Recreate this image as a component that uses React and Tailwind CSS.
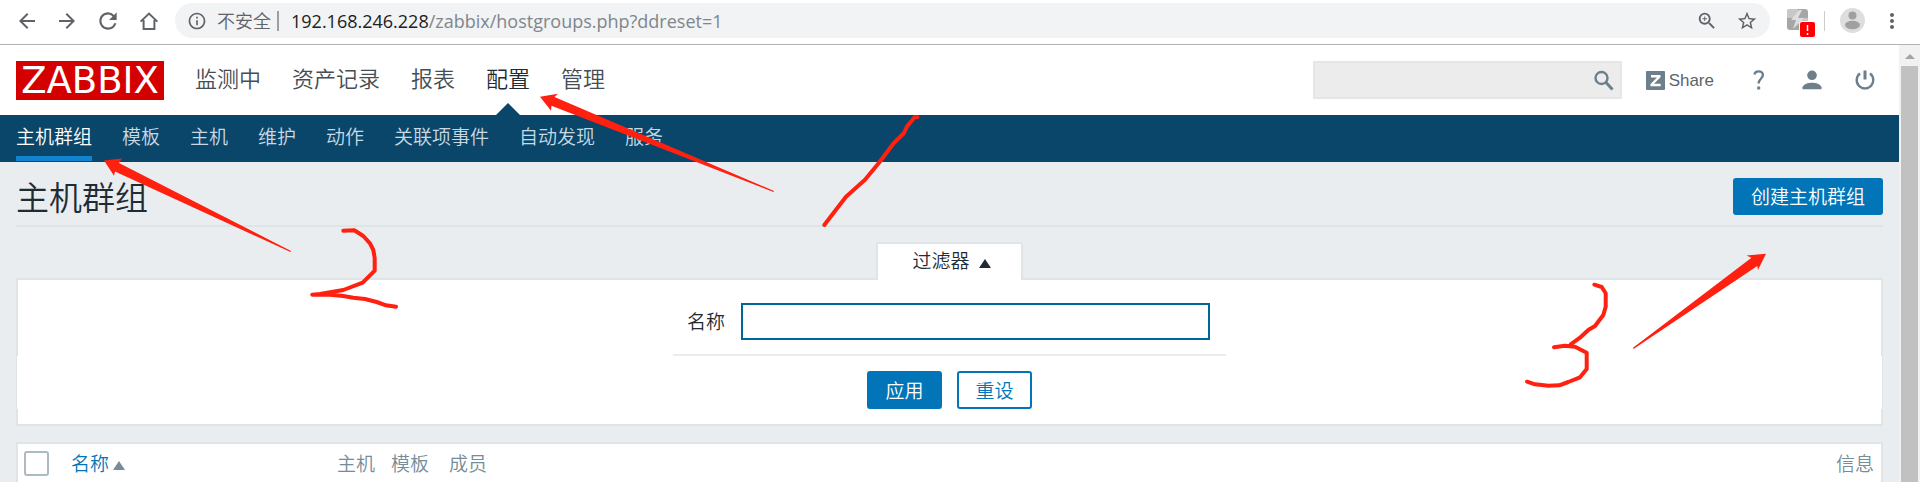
import React from "react";
import {
  MdArrowBack,
  MdArrowForward,
  MdRefresh,
  MdInfoOutline,
  MdZoomIn,
  MdStarBorder,
  MdMoreVert,
} from "react-icons/md";

const mainMenu = ["监测中", "资产记录", "报表", "配置", "管理"];
const subMenu = ["主机群组", "模板", "主机", "维护", "动作", "关联项事件", "自动发现", "服务"];

function Toolbar() {
  return (
    <div className="flex h-[45px] items-center border-b border-[#b3b3b3] bg-white pb-[3px] pl-[15px] pr-4 text-[#5f6368]">
      <div className="flex items-center gap-4">
        <button aria-label="后退"><MdArrowBack className="size-6" /></button>
        <button aria-label="前进"><MdArrowForward className="size-6" /></button>
        <button aria-label="重新加载"><MdRefresh className="size-[26px]" /></button>
        <button aria-label="主页">
          <svg viewBox="0 0 24 24" className="size-6" fill="none" stroke="currentColor" strokeWidth="2">
            <path d="M3.600 12.600 12 4.600l8.400 8M6.600 11v8.900h10.800V11" />
          </svg>
        </button>
      </div>
      <div className="ml-[14px] flex h-[35px] grow items-center rounded-full bg-[#f1f3f4] pl-3 pr-3">
        <MdInfoOutline className="size-5" />
        <span className="ml-[10px] text-[18px] font-[350]">不安全</span>
        <span className="ml-[6px] h-5 w-[2px] bg-[#9aa0a6]" />
        <div className="ml-3 whitespace-nowrap font-['Open_Sans','Noto_Sans',sans-serif] text-[18px] leading-6 text-[#80868b]">
          <span className="text-[#202124]">192.168.246.228</span>/zabbix/hostgroups.php?ddreset=1
        </div>
        <div className="ml-auto flex items-center gap-[18px]">
          <button aria-label="缩放"><MdZoomIn className="size-[22px]" /></button>
          <button aria-label="添加书签"><MdStarBorder className="size-[22px]" /></button>
        </div>
      </div>
      <button aria-label="扩展程序" className="ml-4">
        <svg width="30" height="30" viewBox="0 0 30 30" className="mt-1">
          <rect x="1" y="1" width="21" height="21" rx="3" fill="#a6a6a6" />
          <path d="M4 1h8v9H1V4a3 3 0 0 1 3-3M12 10h10v3H12z" fill="#c8c8c8" />
          <path d="M13 2 5 12h5l-3 9 11-11h-6l4-8z" fill="#dedede" />
          <rect x="13" y="13" width="17" height="17" rx="3" fill="#fff" />
          <rect x="14" y="14" width="15" height="15" rx="2" fill="#f00" />
          <path d="M21.500 17v6M21.500 25v2" stroke="#fff" strokeWidth="1.500" />
        </svg>
      </button>
      <span className="ml-[8px] h-5 w-px bg-[#ccc]" />
      <button aria-label="用户" className="ml-[15px]">
        <svg width="25" height="25" viewBox="0 0 25 25">
          <circle cx="12.500" cy="12.500" r="12.500" fill="#dedede" />
          <circle cx="12.500" cy="7.500" r="4" fill="#a0a0a0" />
          <ellipse cx="12.500" cy="17" rx="7.500" ry="4.200" fill="#a0a0a0" />
        </svg>
      </button>
      <button aria-label="菜单" className="ml-[15px]"><MdMoreVert className="size-6" /></button>
    </div>
  );
}

function Header() {
  return (
    <header className="flex h-[70px] items-center bg-white pl-4 pr-6 text-[#6c7f8a]">
      <a href="#" className="flex h-[39px] w-[148px] items-center justify-center bg-[#d40000] font-['DejaVu_Sans',sans-serif] text-[37px] leading-none text-white">
        ZABBIX
      </a>
      <nav className="ml-[31px] flex h-full gap-[31px] text-[22px] font-[350] text-[#464d54]">
        {mainMenu.map((m) => (
          <a key={m} href="#" className={m === "配置" ? "relative flex items-center pb-[5px] text-[#1f2c33]" : "flex items-center pb-[5px]"}>
            {m}
            {m === "配置" && (
              <span className="absolute bottom-0 left-1/2 -ml-3 border-x-12 border-b-12 border-x-transparent border-b-[#0a466a]" />
            )}
          </a>
        ))}
      </nav>
      <div className="ml-auto flex h-[38px] w-[309px] items-center border-2 border-[#e6e6e6] bg-[#ececec] pr-[6px]">
        <input aria-label="搜索" className="h-full min-w-0 grow bg-transparent px-2 outline-none" />
        <button aria-label="搜索">
          <svg width="20" height="21" viewBox="0 0 20 21" fill="none" stroke="currentColor">
            <circle cx="7.500" cy="8" r="6" strokeWidth="2.400" />
            <path d="m12 12.500 6.500 7" strokeWidth="3" />
          </svg>
        </button>
      </div>
      <a href="#" className="ml-6 flex items-center gap-1 font-['Liberation_Sans',sans-serif] text-[17px]">
        <svg width="19" height="19" viewBox="0 0 19 19">
          <rect width="19" height="19" rx="1" fill="currentColor" />
          <path d="M5 4h9.500v2.200L8 12.800h6.700V15.300H4.500V13L11 6.500H5z" fill="#fff" />
        </svg>
        <span className="pt-[2px] text-[#5c656b]">Share</span>
      </a>
      <a href="#" aria-label="帮助" className="ml-[39px]">
        <svg width="12" height="20" viewBox="0 0 12 20" fill="none" stroke="currentColor" strokeWidth="2.400">
          <path d="M1.500 4.500C1.800 2.500 3.200 1.400 5.600 1.400c2.700 0 4.300 1.400 4.300 3.600 0 3.600-4.300 4-4.300 8.400" />
          <path d="M4.200 18h3" strokeWidth="3" />
        </svg>
      </a>
      <a href="#" aria-label="用户资料" className="ml-[37px]">
        <svg width="20" height="20" viewBox="0 0 20 20" fill="currentColor">
          <circle cx="10" cy="5.300" r="4.800" />
          <path d="M.5 19.200v-2C1.500 14 6 12.700 10 12.700s8.500 1.300 9.500 4.500v2z" />
        </svg>
      </a>
      <a href="#" aria-label="退出" className="ml-[33px]">
        <svg width="20" height="20" viewBox="0 0 20 20" fill="none" stroke="currentColor">
          <path d="M5 3.500a8.300 8.300 0 1 0 10 0" strokeWidth="2.400" />
          <path d="M10 .5v9" strokeWidth="3" />
        </svg>
      </a>
    </header>
  );
}

function SubNav() {
  return (
    <nav className="flex h-[47px] gap-[30px] bg-[#0a466a] px-4 pb-px text-[19px] font-[350] text-[#c8d9e3]">
      {subMenu.map((m, i) => (
        <a
          key={m}
          href="#"
          className={
            i === 0
              ? "flex items-center border-b-5 border-[#1183cf] pt-px text-white"
              : "flex items-center border-b-5 border-transparent pt-px"
          }
        >
          {m}
        </a>
      ))}
    </nav>
  );
}

function Filter() {
  return (
    <form className="mt-[15px]" onSubmit={(e) => e.preventDefault()}>
      <div className="flex justify-center">
        <button
          type="button"
          className="relative -mb-[2px] flex h-[38px] w-[147px] items-center justify-center gap-[9px] rounded-t-[3px] border-2 border-b-0 border-[#dfe4e7] bg-white pb-1 pl-1 text-[19px] leading-6 font-[350] text-[#1f2c33]"
        >
          过滤器
          <span className="mt-[6px] border-x-[6px] border-b-[9px] border-x-transparent border-b-[#1f2c33]" />
        </button>
      </div>
      <div className="border-2 border-[#dfe4e7] bg-white pb-[15px] pt-[23px]">
        <div className="mx-auto flex w-[553px] items-center gap-4 border-b-2 border-[#e9edef] pl-[14px] pr-4 pb-[14px]">
          <label htmlFor="group-name" className="text-[19px] font-[350]">名称</label>
          <input id="group-name" className="h-[37px] min-w-0 grow border-2 border-[#00659c] bg-white px-2 outline-none" />
        </div>
        <div className="-mx-px flex justify-center gap-[15px] bg-white pt-[15px] text-[19px] font-[350]">
          <button className="h-[38px] w-[75px] rounded-[3px] border-2 border-[#0275b8] bg-[#0275b8] leading-6 text-white">应用</button>
          <button type="reset" className="h-[38px] w-[75px] rounded-[3px] border-2 border-[#0275b8] bg-white leading-6 text-[#0275b8]">重设</button>
        </div>
      </div>
    </form>
  );
}

function GroupTable() {
  return (
    <table className="mt-4 w-full table-fixed border-separate border-spacing-0 border-2 border-b-0 border-[#dfe4e7] bg-white text-left text-[19px] text-[#768d99]">
      <thead>
        <tr className="h-[38px] *:p-0 *:font-[350]">
          <th className="w-12">
            <input type="checkbox" aria-label="全选" className="ml-[6px] block size-[25px] appearance-none rounded-[3px] border-2 border-[#acbbc2] bg-white" />
          </th>
          <th className="w-[266px]">
            <a href="#" className="ml-[5px] flex items-center gap-1 text-[#0275b8]">
              名称
              <span className="mt-1 border-x-[6px] border-b-[9px] border-x-transparent border-b-[#768d99]" />
            </a>
          </th>
          <th className="w-[54px]"><span className="ml-[5px]">主机</span></th>
          <th className="w-[58px]"><span className="ml-[5px]">模板</span></th>
          <th><span className="ml-[5px]">成员</span></th>
          <th className="text-right"><span className="mr-[7px]">信息</span></th>
        </tr>
      </thead>
    </table>
  );
}

function Annotations() {
  return (
    <svg className="pointer-events-none absolute left-0 top-0" width="1920" height="482" viewBox="0 0 1920 482" aria-hidden="true">
      <g fill="#ff2010">
        <path d="M540 96.700 558 93.700 554.500 97 774 191 773.500 192 551.500 105.700 551 110.700z" />
        <path d="M104 160.500 122 158.500 119 163 291 251 290.500 252 115 171.500 114 175.700z" />
        <path d="M1766 253.700 1746.500 255.500 1751.500 257.800 1633 347.800 1633.500 349 1757.300 266 1758 270z" />
      </g>
      <g fill="none" stroke="#ff2010" strokeWidth="4" strokeLinecap="round" strokeLinejoin="round">
        <path d="M917.500 117.300H914.500L906.700 127 904 133 893.300 143.700 879 162.700 865 179.700 846 196.700 833.300 213.300 824.300 225" />
        <path d="M343.300 230.700 354.300 230.300 363.300 236 370 243.300 373.300 250 374.700 258V270.700L362.700 282.700 343.300 290 320 294 312.300 294.700H330L343.300 296 353.300 297.700 365 299 376.700 302 386 305.300 396 306.700" />
        <path d="M1594.300 284.700 1601.700 287 1605.700 293.300V306.700L1603.300 315 1595 326 1588.300 330 1580 337.700 1570.700 344.300M1554 347.300 1565 345.700 1575 346.700 1586.700 352.700V369L1580 377.300 1568.300 382 1559.300 385.300 1548.300 385.700 1535 384.300 1527 381.700" />
      </g>
    </svg>
  );
}

export default function App() {
  return (
    <div className="relative overflow-hidden bg-white font-['Noto_Sans_CJK_SC',sans-serif] text-[#1f2c33]">
      <Toolbar />
      <div className="flex">
        <div className="min-w-0 grow bg-[#e9edf0]">
          <Header />
          <SubNav />
          <main className="px-4">
            <div className="flex h-[65px] items-center justify-between border-b-2 border-[#dfe4e7] pt-[5px]">
              <h1 className="text-[33px] font-[350] leading-none">主机群组</h1>
              <button className="h-[37px] rounded-[3px] bg-[#0275b8] px-[18px] text-[19px] font-[350] leading-6 text-white">
                创建主机群组
              </button>
            </div>
            <Filter />
            <GroupTable />
          </main>
        </div>
        <div className="flex w-[21px] shrink-0 flex-col items-center bg-[#f1f1f1]">
          <span className="mb-[7px] mt-[9px] border-x-[5px] border-b-[5px] border-x-transparent border-b-[#a3a3a3]" />
          <div className="w-[17px] grow bg-[#c1c1c1]" />
        </div>
      </div>
      <Annotations />
    </div>
  );
}
